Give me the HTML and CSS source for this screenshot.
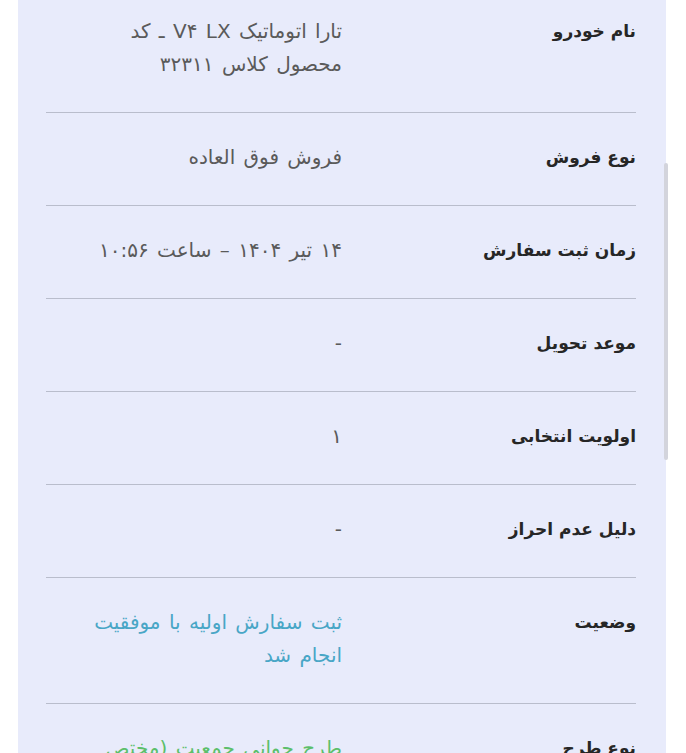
FILE: index.html
```html
<!DOCTYPE html>
<html lang="fa" dir="rtl">
<head>
  <meta charset="UTF-8" />
  <title>جزئیات سفارش</title>
  <link rel="stylesheet" href="styles.css">
</head>
<body>

  <div class="card">
    <div class="row first">
      <div class="label">نام خودرو</div>
      <div class="value">تارا اتوماتیک V۴ LX ـ کد<br>محصول کلاس ۳۲۳۱۱</div>
    </div>
    <div class="row">
      <div class="label">نوع فروش</div>
      <div class="value">فروش فوق العاده</div>
    </div>
    <div class="row">
      <div class="label">زمان ثبت سفارش</div>
      <div class="value">۱۴ تیر ۱۴۰۴ – ساعت ۱۰:۵۶</div>
    </div>
    <div class="row">
      <div class="label">موعد تحویل</div>
      <div class="value">-</div>
    </div>
    <div class="row">
      <div class="label">اولویت انتخابی</div>
      <div class="value">۱</div>
    </div>
    <div class="row">
      <div class="label">دلیل عدم احراز</div>
      <div class="value">-</div>
    </div>
    <div class="row">
      <div class="label">وضعیت</div>
      <div class="value status">ثبت سفارش اولیه با موفقیت<br>انجام شد</div>
    </div>
    <div class="row">
      <div class="label">نوع طرح</div>
      <div class="value plan">طرح جوانی جمعیت (مختص<br>خانواده‌های دارای فرزند)</div>
    </div>
  </div>

  <!-- overlay scrollbar -->
  <div class="scroll-thumb"></div>

</body>
</html>
```

FILE: styles.css
```css
html, body {
  margin: 0;
  padding: 0;
  background: #fff;
  height: 100%;
  overflow: hidden;
}

body {
  font-family: "DejaVu Sans", "Noto Sans", sans-serif;
  color: #2b2b2b;
}

.card {
  margin: 0 20px 0 18px;
  padding: 0 30px 0 28px;
  background: #e8ebfb;
}

.row {
  display: flex;
  align-items: flex-start;
  padding: 28px 0 31px;
  border-bottom: 1px solid #b9bdcc;
  line-height: 33px;
}

.row.first {
  padding-top: 15px;
}

.label {
  width: 294px;
  flex-shrink: 0;
  font-size: 17px;
  font-weight: bold;
  color: #262626;
}

.value {
  flex: 1;
  font-size: 20px;
  word-spacing: 2px;
  color: #5a5a5a;
}

.status {
  color: #48a6c6;
}

.plan {
  color: #5cbf6a;
}

.scroll-thumb {
  position: absolute;
  left: 664px;
  top: 163px;
  width: 4px;
  height: 297px;
  background: #d3d4dc;
  border-radius: 2px;
}
```
